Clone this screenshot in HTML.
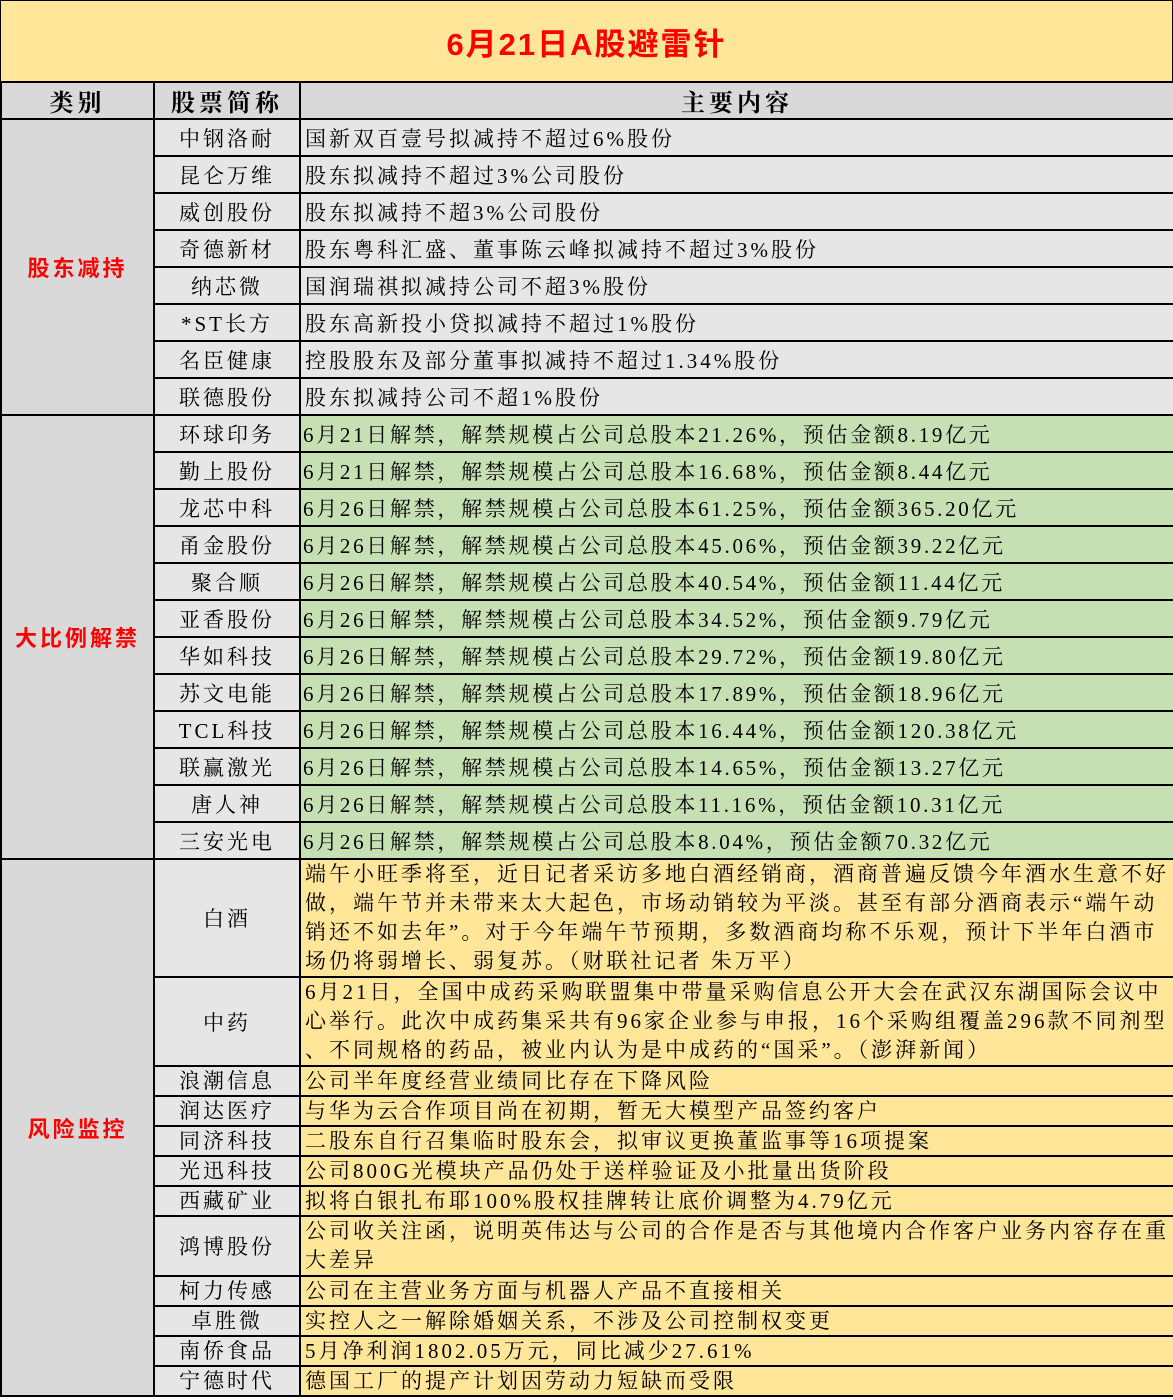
<!DOCTYPE html>
<html><head><meta charset="utf-8">
<style>
html,body{margin:0;padding:0;background:#fff;}
body{width:1173px;height:1400px;overflow:hidden;position:relative;font-family:"Liberation Serif","Noto Serif CJK SC",serif;}
.title{position:absolute;left:0;top:0;width:1171px;height:81px;background:#FFE699;border:1px solid #000;border-bottom:none;text-align:center;line-height:88px;color:#FF0000;font-weight:bold;font-size:31px;letter-spacing:2px;font-family:"Liberation Sans","Noto Sans CJK SC",sans-serif;}
table{position:absolute;left:0;top:81px;border-collapse:collapse;table-layout:fixed;width:1173px;}
td{border:2px solid #000;padding:0;font-size:21px;letter-spacing:3px;color:#000;white-space:nowrap;overflow:hidden;}
th{border:2px solid #000;background:#D9D9D9;font-size:24px;letter-spacing:4px;height:35px;padding:0;}
.c{background:#D9D9D9;color:#FF0000;font-weight:bold;text-align:center;font-size:22px;font-family:"Liberation Sans","Noto Sans CJK SC",sans-serif;}
.n{background:#E7E6E6;text-align:center;}
.g1{background:#E7E6E6;padding-left:4px;}
.g2{background:#C6E0B4;padding-left:2px;letter-spacing:2.7px;}
.g3{background:#FFE699;padding-left:4px;line-height:29px;}
tr.r37 td{height:35px;}
tr.r30 td{height:28px;line-height:27px;}
</style></head><body>
<div class="title">6月21日A股避雷针</div>
<table>
<colgroup><col style="width:153px"><col style="width:146px"><col style="width:874px"></colgroup>
<tr><th>类别</th><th>股票简称</th><th>主要内容</th></tr>
<tr class="r37"><td class="c" rowspan="8">股东减持</td><td class="n">中钢洛耐</td><td class="g1">国新双百壹号拟减持不超过6%股份</td></tr>
<tr class="r37"><td class="n">昆仑万维</td><td class="g1">股东拟减持不超过3%公司股份</td></tr>
<tr class="r37"><td class="n">威创股份</td><td class="g1">股东拟减持不超3%公司股份</td></tr>
<tr class="r37"><td class="n">奇德新材</td><td class="g1">股东粤科汇盛、董事陈云峰拟减持不超过3%股份</td></tr>
<tr class="r37"><td class="n">纳芯微</td><td class="g1">国润瑞祺拟减持公司不超3%股份</td></tr>
<tr class="r37"><td class="n">*ST长方</td><td class="g1">股东高新投小贷拟减持不超过1%股份</td></tr>
<tr class="r37"><td class="n">名臣健康</td><td class="g1">控股股东及部分董事拟减持不超过1.34%股份</td></tr>
<tr class="r37"><td class="n">联德股份</td><td class="g1">股东拟减持公司不超1%股份</td></tr>
<tr class="r37"><td class="c" rowspan="12">大比例解禁</td><td class="n">环球印务</td><td class="g2">6月21日解禁，解禁规模占公司总股本21.26%，预估金额8.19亿元</td></tr>
<tr class="r37"><td class="n">勤上股份</td><td class="g2">6月21日解禁，解禁规模占公司总股本16.68%，预估金额8.44亿元</td></tr>
<tr class="r37"><td class="n">龙芯中科</td><td class="g2">6月26日解禁，解禁规模占公司总股本61.25%，预估金额365.20亿元</td></tr>
<tr class="r37"><td class="n">甬金股份</td><td class="g2">6月26日解禁，解禁规模占公司总股本45.06%，预估金额39.22亿元</td></tr>
<tr class="r37"><td class="n">聚合顺</td><td class="g2">6月26日解禁，解禁规模占公司总股本40.54%，预估金额11.44亿元</td></tr>
<tr class="r37"><td class="n">亚香股份</td><td class="g2">6月26日解禁，解禁规模占公司总股本34.52%，预估金额9.79亿元</td></tr>
<tr class="r37"><td class="n">华如科技</td><td class="g2">6月26日解禁，解禁规模占公司总股本29.72%，预估金额19.80亿元</td></tr>
<tr class="r37"><td class="n">苏文电能</td><td class="g2">6月26日解禁，解禁规模占公司总股本17.89%，预估金额18.96亿元</td></tr>
<tr class="r37"><td class="n">TCL科技</td><td class="g2">6月26日解禁，解禁规模占公司总股本16.44%，预估金额120.38亿元</td></tr>
<tr class="r37"><td class="n">联赢激光</td><td class="g2">6月26日解禁，解禁规模占公司总股本14.65%，预估金额13.27亿元</td></tr>
<tr class="r37"><td class="n">唐人神</td><td class="g2">6月26日解禁，解禁规模占公司总股本11.16%，预估金额10.31亿元</td></tr>
<tr class="r37"><td class="n">三安光电</td><td class="g2">6月26日解禁，解禁规模占公司总股本8.04%，预估金额70.32亿元</td></tr>
<tr><td class="c" rowspan="12">风险监控</td><td class="n" style="height:116px">白酒</td><td class="g3">端午小旺季将至，近日记者采访多地白酒经销商，酒商普遍反馈今年酒水生意不好<br>做，端午节并未带来太大起色，市场动销较为平淡。甚至有部分酒商表示“端午动<br>销还不如去年”。对于今年端午节预期，多数酒商均称不乐观，预计下半年白酒市<br>场仍将弱增长、弱复苏。（财联社记者 朱万平）</td></tr>
<tr><td class="n" style="height:87px">中药</td><td class="g3">6月21日，全国中成药采购联盟集中带量采购信息公开大会在武汉东湖国际会议中<br>心举行。此次中成药集采共有96家企业参与申报，16个采购组覆盖296款不同剂型<br>、不同规格的药品，被业内认为是中成药的“国采”。（澎湃新闻）</td></tr>
<tr class="r30"><td class="n">浪潮信息</td><td class="g3">公司半年度经营业绩同比存在下降风险</td></tr>
<tr class="r30"><td class="n">润达医疗</td><td class="g3">与华为云合作项目尚在初期，暂无大模型产品签约客户</td></tr>
<tr class="r30"><td class="n">同济科技</td><td class="g3">二股东自行召集临时股东会，拟审议更换董监事等16项提案</td></tr>
<tr class="r30"><td class="n">光迅科技</td><td class="g3">公司800G光模块产品仍处于送样验证及小批量出货阶段</td></tr>
<tr class="r30"><td class="n">西藏矿业</td><td class="g3">拟将白银扎布耶100%股权挂牌转让底价调整为4.79亿元</td></tr>
<tr><td class="n" style="height:58px">鸿博股份</td><td class="g3">公司收关注函，说明英伟达与公司的合作是否与其他境内合作客户业务内容存在重<br>大差异</td></tr>
<tr class="r30"><td class="n">柯力传感</td><td class="g3">公司在主营业务方面与机器人产品不直接相关</td></tr>
<tr class="r30"><td class="n">卓胜微</td><td class="g3">实控人之一解除婚姻关系，不涉及公司控制权变更</td></tr>
<tr class="r30"><td class="n">南侨食品</td><td class="g3">5月净利润1802.05万元，同比减少27.61%</td></tr>
<tr class="r30"><td class="n">宁德时代</td><td class="g3">德国工厂的提产计划因劳动力短缺而受限</td></tr>
</table>
</body></html>
